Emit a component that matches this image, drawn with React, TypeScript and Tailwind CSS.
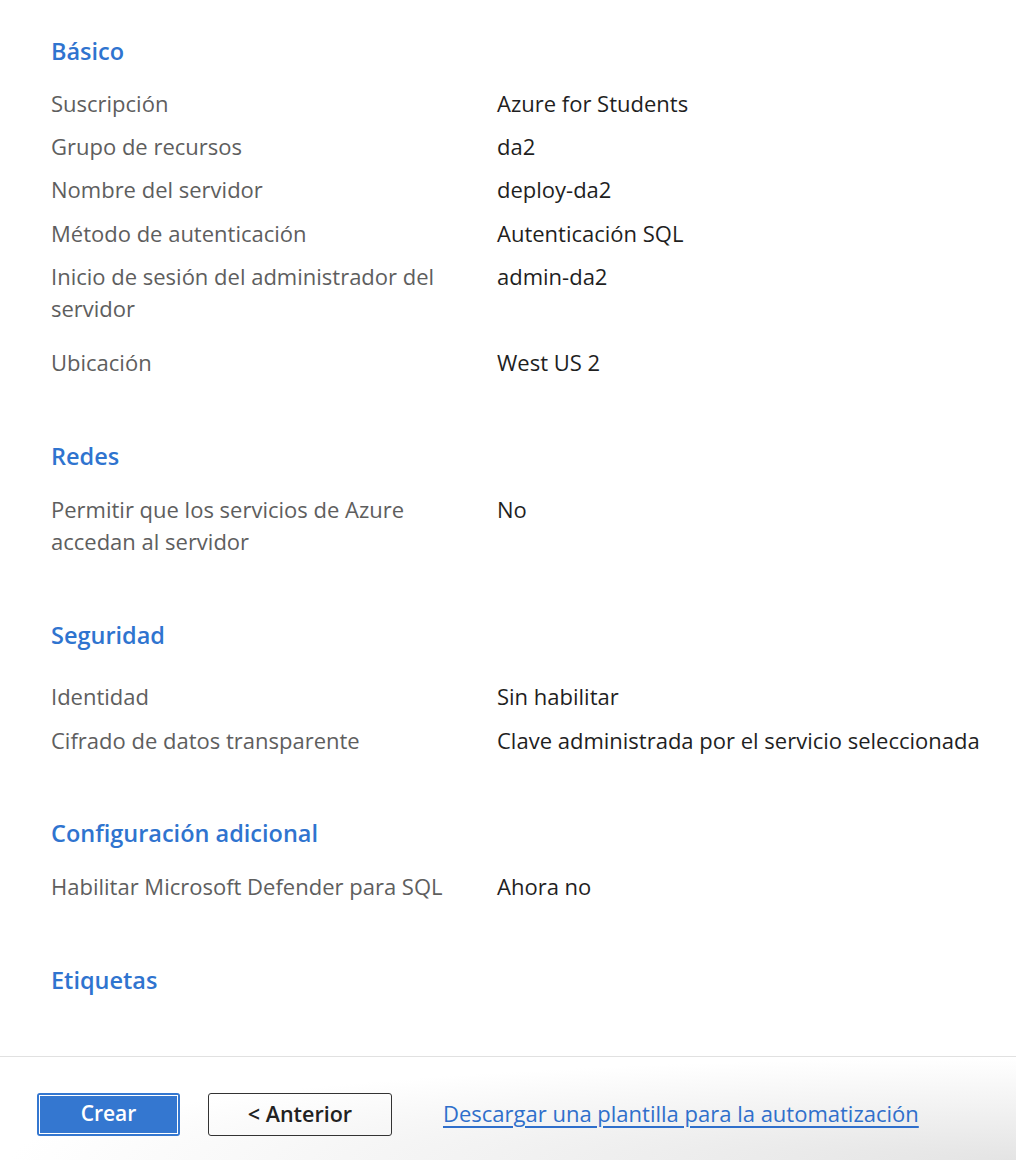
import React from 'react';

interface Row {
  label: React.ReactNode;
  value: string;
  gap: string;
}

interface Section {
  title: string;
  gap: string;
  rows: Row[];
}

const sections: Section[] = [
  {
    title: 'Básico',
    gap: 'mt-0',
    rows: [
      { label: 'Suscripción', value: 'Azure for Students', gap: 'mt-[20px]' },
      { label: 'Grupo de recursos', value: 'da2', gap: 'mt-[11px]' },
      { label: 'Nombre del servidor', value: 'deploy-da2', gap: 'mt-[11px]' },
      { label: 'Método de autenticación', value: 'Autenticación SQL', gap: 'mt-[12px]' },
      {
        label: (
          <>
            Inicio de sesión del administrador del
            <br />
            servidor
          </>
        ),
        value: 'admin-da2',
        gap: 'mt-[11px]',
      },
      { label: 'Ubicación', value: 'West US 2', gap: 'mt-[22px]' },
    ],
  },
  {
    title: 'Redes',
    gap: 'mt-[62px]',
    rows: [
      {
        label: (
          <>
            Permitir que los servicios de Azure
            <br />
            accedan al servidor
          </>
        ),
        value: 'No',
        gap: 'mt-[21px]',
      },
    ],
  },
  {
    title: 'Seguridad',
    gap: 'mt-[62px]',
    rows: [
      { label: 'Identidad', value: 'Sin habilitar', gap: 'mt-[29px]' },
      { label: 'Cifrado de datos transparente', value: 'Clave administrada por el servicio seleccionada', gap: 'mt-[12px]' },
    ],
  },
  {
    title: 'Configuración adicional',
    gap: 'mt-[61px]',
    rows: [{ label: 'Habilitar Microsoft Defender para SQL', value: 'Ahora no', gap: 'mt-[21px]' }],
  },
  {
    title: 'Etiquetas',
    gap: 'mt-[62px]',
    rows: [],
  },
];

const App: React.FC = () => {
  return (
    <div
      className="w-[1016px] h-[1160px] bg-white flex flex-col overflow-hidden"
      style={{ fontFamily: '"Open Sans", "Noto Sans", sans-serif' }}
    >
      {/* Review summary */}
      <div className="h-[1056px] pt-[35px] pl-[51px]">
        {sections.map((section) => (
          <div key={section.title} className={section.gap}>
            <h2 className="text-[23.5px] leading-8 font-semibold text-[#2f74cf]">{section.title}</h2>
            {section.rows.map((row, i) => (
              <div key={i} className={`grid grid-cols-[446px_1fr] text-[22px] leading-8 ${row.gap}`}>
                <div className="text-[#5e5e5e] whitespace-nowrap">{row.label}</div>
                <div className="text-[#1f1f1f] whitespace-nowrap">{row.value}</div>
              </div>
            ))}
          </div>
        ))}
      </div>

      {/* Footer actions */}
      <div className="flex-1 border-t border-[#e1e1e1] bg-[radial-gradient(ellipse_at_bottom_right,#e4e4e4,#ffffff_70%)] pt-[36px] pl-[37px] flex items-start">
        <button className="w-[143px] h-[43px] rounded-[3px] bg-[#3477d0] p-[2px]">
          <span className="flex h-full w-full items-center justify-center border border-white text-white text-[21px] font-semibold leading-none pb-[2px]">
            Crear
          </span>
        </button>
        <button className="ml-[28px] w-[184px] h-[43px] rounded-[3px] border border-[#333333] bg-transparent text-[#222222] text-[21.5px] font-semibold leading-none pb-[2px] flex items-center justify-center">
          &lt; Anterior
        </button>
        <a className="ml-[51px] mt-[4px] text-[22px] leading-8 text-[#2f6fcb] underline underline-offset-4 cursor-pointer whitespace-nowrap">
          Descargar una plantilla para la automatización
        </a>
      </div>
    </div>
  );
};

export default App;
